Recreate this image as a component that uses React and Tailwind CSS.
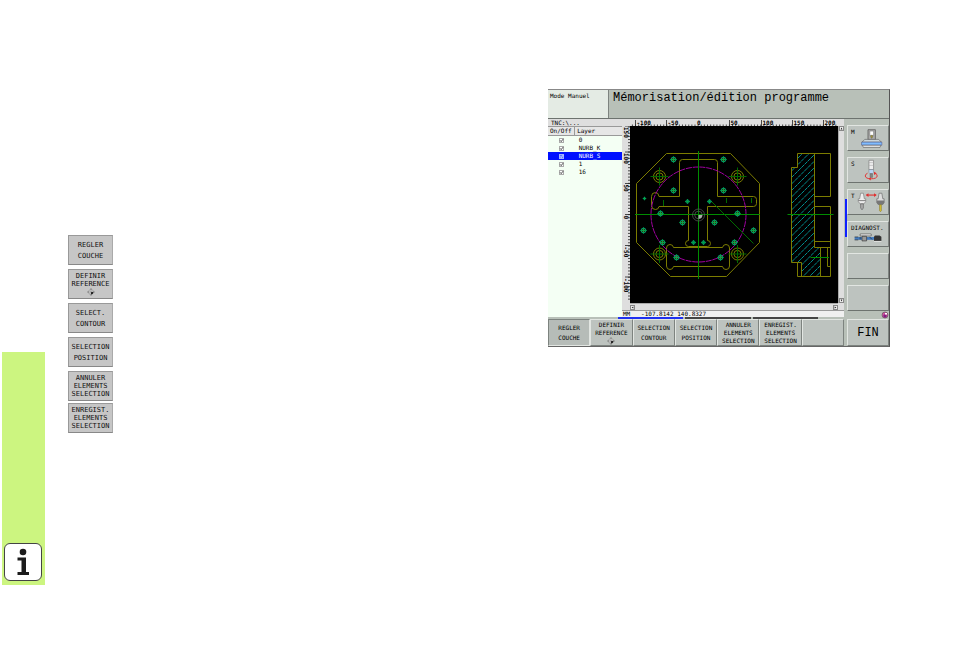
import { useState } from "react";

const layerNames = ["0", "NURB_K", "NURB_S", "1", "16"];

const sideKeys = [
	["REGLER", "COUCHE"],
	["DEFINIR", "REFERENCE", "*"],
	["SELECT.", "CONTOUR"],
	["SELECTION", "POSITION"]
];

const sideKeysTight = [
	["ANNULER", "ELEMENTS", "SELECTION"],
	["ENREGIST.", "ELEMENTS", "SELECTION"]
];

const softKeys = [
	["REGLER", "COUCHE"],
	["DEFINIR", "REFERENCE", "*"],
	["SELECTION", "CONTOUR"],
	["SELECTION", "POSITION"],
	["ANNULER", "ELEMENTS", "SELECTION"],
	["ENREGIST.", "ELEMENTS", "SELECTION"],
	[]
];

// [x, y, radius]
const holes = [
	[43, 33, 2.4],
	[93, 33, 2.4],
	[43, 64, 2.4],
	[93, 64, 2.4],
	[14, 72, 1],
	[57, 75, 1.6],
	[79, 75, 1.6],
	[30, 87, 2.4],
	[107, 87, 2.4],
	[52, 96, 2.4],
	[84, 96, 2.4],
	[13, 104, 2.4],
	[123, 104, 2.4],
	[32, 116, 2.4],
	[104, 116, 2.4],
	[46, 131, 2.4],
	[90, 131, 2.4],
	[63, 116, 1.6],
	[73, 116, 1.6]
];

const bores = [
	[29.5, 50.5],
	[107.5, 50.5],
	[29.5, 128],
	[107.5, 128]
];

function DatumIcon() {
	return (
		<svg viewBox="0 0 8 8" className="block h-2 w-2" aria-hidden="true">
			<circle cx="4" cy="4" r="2.4" fill="#eee" stroke="#777" strokeWidth=".6" />
			<path d="M4 4h2.4A2.4 2.4 0 0 1 4 6.400z" fill="#111" />
			<path d="M4 0v8M0 4h8" stroke="#555" strokeWidth=".5" />
		</svg>
	);
}

function KeyLines({ lines }) {
	return lines.map((line, index) => (line === "*" ? <DatumIcon key={index} /> : <span key={index}>{line}</span>));
}

function SideKey({ lines }) {
	return (
		<button
			className={
				"flex h-[30px] w-full flex-col items-center justify-center border border-t-[#999] border-l-[#999] border-r-[#aaa] border-b-[#888] bg-[#c6c6c6] text-[7px] leading-2 text-[#111] " +
				(lines.length === 2 ? "gap-[3px]" : "")
			}
		>
			<KeyLines lines={lines} />
		</button>
	);
}

function SoftKey({ lines, pressed }) {
	return (
		<button
			className={
				"flex h-[27px] min-w-0 flex-col items-center justify-center border text-[6px] leading-2 " +
				(pressed
					? "border-t-[#7d837f] border-l-[#7d837f] border-r-[#e2e6e2] border-b-[#e2e6e2] bg-[#b6bcb8] "
					: "border-t-[#e2e6e2] border-l-[#e2e6e2] border-r-[#7d837f] border-b-[#7d837f] bg-[#bdc3bf] ") +
				(lines.length === 2 ? "gap-0.5" : "")
			}
			aria-label={lines.length ? undefined : "-"}
		>
			<KeyLines lines={lines} />
		</button>
	);
}

function MachineKey({ label, children }) {
	return (
		<button
			className="relative block h-[26px] w-full border border-t-[#e2e6e2] border-l-[#e2e6e2] border-r-[#7d837f] border-b-[#6d736f] bg-[#bdc3bf] text-left text-[6px] leading-2"
			aria-label={label || "-"}
		>
			<svg viewBox="0 0 41 26" className="absolute inset-0 h-full w-full" aria-hidden="true">
				{children}
			</svg>
			<span className="absolute top-0.5 left-[3px]">{label}</span>
		</button>
	);
}

function Hole({ x, y, r }) {
	return (
		<g fill="none">
			<circle cx={x} cy={y} r={r} stroke="#00a070" strokeWidth="1" />
			{r > 2 && <circle cx={x} cy={y} r="1.1" stroke="#8a9a20" strokeWidth=".8" />}
			<path d={`M${x - r - 0.8} ${y}h${2 * r + 1.6}M${x} ${y - r - 0.8}v${2 * r + 1.6}`} stroke="#00b050" strokeWidth=".8" />
		</g>
	);
}

function Drawing() {
	return (
		<svg viewBox="0 0 208 177" className="block w-full bg-black" role="img" aria-label="Contour">
			<defs>
				<clipPath id="section">
					<path d="M167.5 27.5H184.5V121.5H190.5V150.5H171.5V136.5H161.5V41.5H167.5z" />
				</clipPath>
			</defs>

			{/* hatched section */}
			<g clipPath="url(#section)" stroke="#00a0a0" strokeWidth=".9" strokeDasharray="4 .6">
				{Array.from({ length: 28 }, (_, i) => (
					<path key={i} d={`M155 ${32 + i * 6.5}l45 -45`} />
				))}
			</g>

			<g fill="none" stroke="#7c7c00" strokeWidth="1">
				<path d="M36.5 27.5H100.5L129.5 57.5V116.5L96.5 150.5H40.5L6.5 116.5V57.5z" />
				<path d="M52.5 33.5H84.5Q87.5 33.5 87.5 36.5V70.5H123.5Q126.5 70.5 126.5 73.5V77.5Q126.5 80.5 123.5 80.5H77.5V114.5Q80.5 114.5 80.5 117.5T77.5 120.5H58.5Q55.5 120.5 55.5 117.5T58.5 114.5V80.5H29Q28.5 83.5 25.5 83.5Q21.5 83.5 21.5 79.5V70.5Q21.5 66.5 25.5 66.5Q28.5 66.5 29 70.5H49.5V36.5Q49.5 33.5 52.5 33.5z" />
				<path d="M43.5 121.5H92.5Q93 118.5 96 118.5Q99.5 118.5 99.5 122V140Q99.5 143.5 96 143.5Q93 143.5 92.5 140.5H43.5Q43 143.5 40 143.5Q36.5 143.5 36.5 140V122Q36.5 118.5 40 118.5Q43 118.5 43.5 121.5z" />
				<path d="M167.5 27.5H200.5V70.5H184.5M167.5 27.5V41.5H161.5V136.5H171.5V150.5M184.5 27.5V121.5H200.5M184.5 80.5H200.5V150.5H167.5V136.5M184.5 115.5H200.5M190.5 121.5V150.5M197.5 121.5V140.5H200.5" />
				{bores.map(([x, y]) => (
					<g key={x + "-" + y}>
						<circle cx={x} cy={y} r="6" />
						<circle cx={x} cy={y} r="3.6" />
					</g>
				))}
			</g>

			<circle cx="68.5" cy="88.5" r="47.5" fill="none" stroke="#a000a0" strokeWidth="1" strokeDasharray="6 .8" />

			<g fill="none" stroke="#006c00" strokeWidth="1">
				<path d="M68.5 25V153M5 88.5H130M157.5 88.5H203.5M180.5 131.5H199" stroke="#008c00" />
				<path d="M82 76L123.5 117.5M33.5 74V80M96.5 72V77M121.5 72V77" />
				{bores.map(([x, y]) => (
					<path key={x + "-" + y} d={`M${x - 9} ${y}h18M${x} ${y - 9}v18`} />
				))}
			</g>

			{holes.map(([x, y, r]) => (
				<Hole key={x + "-" + y} x={x + 0.5} y={y + 0.5} r={r} />
			))}

			<g fill="none" stroke="#555" strokeWidth=".8">
				<circle cx="68.5" cy="89" r="6" />
				<circle cx="68.5" cy="89" r="3.8" />
			</g>
			<path d="M68.5 89h3.8a3.8 3.8 0 0 1-3.8 3.8z" fill="#aaa" />
		</svg>
	);
}

function TopRuler() {
	const labels = [
		[5.5, "-100"],
		[36.5, "-50"],
		[68.5, "0"],
		[99.5, "50"],
		[131.5, "100"],
		[162.5, "150"],
		[193.5, "200"]
	];
	return (
		<svg viewBox="0 0 208 7" className="block w-full bg-[#dedede]" aria-hidden="true">
			{Array.from({ length: 66 }, (_, i) => (
				<path key={i} d={`M${2.4 + i * 3.13} 5.5V7`} stroke="#222" strokeWidth=".8" />
			))}
			{labels.map(([x, text]) => (
				<g key={text}>
					{text !== "0" && <path d={`M${x} 1V7`} stroke="#222" strokeWidth=".8" />}
					<text x={text === "0" ? x - 1.5 : x + 1} y="5.5" fontSize="6" fontWeight="bold">
						{text}
					</text>
				</g>
			))}
		</svg>
	);
}

function SideRuler() {
	const labels = [
		[0, "150"],
		[26, "100"],
		[57.5, "50"],
		[88.5, "0"],
		[119.5, "-50"],
		[151, "-100"]
	];
	return (
		<svg viewBox="0 0 8 177" preserveAspectRatio="none" className="block h-full w-full bg-[#dedede]" aria-hidden="true">
			{Array.from({ length: 56 }, (_, i) => (
				<path key={i} d={`M6 ${1 + i * 3.13}H8`} stroke="#222" strokeWidth=".8" />
			))}
			{labels.map(([y, text]) => (
				<g key={text}>
					<path d={`M3 ${y}H8`} stroke="#222" strokeWidth=".8" />
					<text transform={`translate(2 ${y + 1}) rotate(90)`} fontSize="6" fontWeight="bold">
						{text}
					</text>
				</g>
			))}
		</svg>
	);
}

function ScrollButton({ label, path }) {
	return (
		<button aria-label={label} className="block h-[5px] w-[5px] border border-[#888] bg-[#eee]">
			<svg viewBox="0 0 5 5" className="block h-full w-full">
				<path d={path} fill="#222" />
			</svg>
		</button>
	);
}

function LayerList({ selected, onSelect }) {
	const [visible, setVisible] = useState(layerNames);

	const toggle = (name) => {
		setVisible(visible.includes(name) ? visible.filter((item) => item !== name) : [...visible, name]);
	};

	return (
		<div className="bg-[#f4fff4] text-[6px] leading-2">
			<p className="h-2 border-b border-[#999] bg-[#dedede] pl-[3px] leading-[7px]">TNC:\...</p>
			<table className="w-full table-fixed border-collapse">
				<thead>
					<tr className="h-2 bg-[#e6e6e6] text-left">
						<th className="w-[36%] border-r border-b border-[#999] p-0 pl-0.5 font-normal">On/Off</th>
						<th className="border-b border-[#999] p-0 pl-0.5 font-normal">Layer</th>
					</tr>
				</thead>
				<tbody>
					{layerNames.map((name) => (
						<tr
							key={name}
							onClick={() => onSelect(name)}
							className={name === selected ? "h-2 bg-[#0010ff] text-white" : "h-2"}
						>
							<td className="p-0">
								<label className="relative mx-auto block h-[5px] w-[5px]">
									<input
										type="checkbox"
										aria-label={name}
										checked={visible.includes(name)}
										onChange={() => toggle(name)}
										className={
											"peer absolute inset-0 block h-[5px] w-[5px] appearance-none border " +
											(name === selected ? "border-[#a0b0ff] bg-[#5c78ff]" : "border-[#aaa] bg-white")
										}
									/>
									<svg viewBox="0 0 5 5" className="pointer-events-none absolute inset-0 hidden peer-checked:block">
										<path d="M1.2 2.4L2.2 3.6L4 1.2" fill="none" stroke="currentColor" strokeWidth=".7" />
									</svg>
								</label>
							</td>
							<td className="p-0 pl-1">{name}</td>
						</tr>
					))}
				</tbody>
			</table>
		</div>
	);
}

function ControlScreen() {
	const [selected, setSelected] = useState("NURB_S");

	return (
		<section className="border-t border-r border-b border-t-[#888] border-r-[#555] border-b-[#666] bg-[#b8c0b8] text-black">
			{/* HEADER */}
			<header className="grid grid-cols-[60fr_281fr] border-b border-[#6d736f]">
				<p className="h-7 bg-[#e4ebe4] pt-0.5 pl-0.5 text-[6px] leading-2">Mode Manuel</p>
				<h1 className="border-l border-[#7d837f] pl-1 font-['Liberation_Mono','DejaVu_Sans_Mono',monospace] text-[12px] leading-4">
					Mémorisation/édition programme
				</h1>
			</header>

			<div className="grid grid-cols-[296fr_45fr]">
				<div className="flex flex-col">
					<div className="grid grow grid-cols-[74fr_222fr]">
						<LayerList selected={selected} onSelect={setSelected} />

						{/* VIEWER */}
						<div className="grid grid-cols-[8px_1fr_6px] bg-[#dedede]">
							<div />
							<TopRuler />
							<div />
							<SideRuler />
							<Drawing />
							<div className="flex flex-col items-center justify-between border-l border-[#aaa]">
								<ScrollButton label="Up" path="M2.5 1L4 4H1z" />
								<ScrollButton label="Down" path="M2.5 4L4 1H1z" />
							</div>
							<div />
							<div className="flex h-[7px] items-center justify-between border-t border-[#aaa]">
								<ScrollButton label="Left" path="M1 2.5L4 1V4z" />
								<ScrollButton label="Right" path="M4 2.5L1 1V4z" />
							</div>
							<div />
							<p className="col-span-3 h-[7px] border-t border-[#999] bg-[#f0f0f0] pl-px text-[6px] leading-[6px] whitespace-pre">
								{"MM   -107.8142 140.8327"}
							</p>
						</div>
					</div>
					<div className="flex h-0.5 gap-0.5">
						<div className="flex-[68]" />
						<div className="flex-[66] bg-[#2030f0]" />
						<div className="flex-[66] bg-[#444]" />
						<div className="flex-[66] bg-[#444]" />
						<div className="flex-[24]" />
					</div>
				</div>

				{/* MACHINE KEYS */}
				<div className="relative flex flex-col gap-1.5 pt-1.5 pl-[3px]">
					<div className="absolute top-[40%] left-px h-[19%] w-0.5 bg-[#1020ff]" />
					<MachineKey label="M">
						<path d="M20.5 4h8v11h-8z" fill="#aaa" stroke="#555" strokeWidth=".8" />
						<path d="M22.5 5.5h4v5h-4z" fill="#fff" stroke="#666" strokeWidth=".5" />
						<path d="M23.5 10h2v2l-1 1.5l-1-1.5z" fill="#a89830" stroke="#555" strokeWidth=".4" />
						<path d="M17 14.5h15l3 3H14z" fill="#ccd6dc" stroke="#555" strokeWidth=".6" />
						<path d="M13.500 17.5h22v3.300h-22z" fill="#7fbcff" stroke="#447" strokeWidth=".5" />
						<path d="M14.500 20.800h20l-1 2.500H15.500z" fill="#ddd" stroke="#555" strokeWidth=".6" />
					</MachineKey>
					<MachineKey label="S">
						<path d="M21.5 2.5h5v10h-5z" fill="#eee" stroke="#777" strokeWidth=".7" />
						<path d="M21.5 5h5M21.5 8h5" stroke="#aaa" strokeWidth=".6" />
						<path d="M21.5 12.5h5v3l-1 1.5h-3l-1-1.5z" fill="#b8d4f4" stroke="#777" strokeWidth=".5" />
						<path d="M22.8 17h2.5v4h-2.5z" fill="#888" stroke="#444" strokeWidth=".4" />
						<path d="M20 16.5Q17.500 17.5 17.5 19.5Q18 22.500 24 22.5T30.5 19.5Q30.5 17.5 28 16.5" fill="none" stroke="#e03030" strokeWidth="1" />
						<path d="M27 15l3 1.5l-3 1.8zM21 22.5l2.5-1.8v3.600z" fill="#e03030" />
					</MachineKey>
					<MachineKey label="T">
						<path d="M12.5 3.5h3l1 6H18v3l-2 2.5h-4l-2-2.5v-3h1.5z" fill="#eee" stroke="#777" strokeWidth=".7" />
						<path d="M10 11.5h8" stroke="#777" strokeWidth="1" />
						<path d="M12.5 15h3v4.5l-1.5 2l-1.500-2z" fill="#aaa" stroke="#555" strokeWidth=".6" />
						<path d="M32.5 3.5h3l1 6H38v4l-1.5 2h-5l-1.5-2v-4h1.5z" fill="#ddd" stroke="#666" strokeWidth=".7" />
						<path d="M30 11.5h8v2.5l-1.5 2h-5l-1.5-2z" fill="#777" />
						<path d="M33 16h2v6.5l-1 1l-1-1z" fill="#d8c030" stroke="#776a20" strokeWidth=".5" />
						<path d="M19 5.5h10" stroke="#e03030" strokeWidth="1.2" />
						<path d="M18 5.5l3-2v4zM30 5.5l-3-2v4z" fill="#e03030" />
					</MachineKey>
					<MachineKey label="DIAGNOST.">
						<path d="M12 13h12v2H12z" fill="#fff" stroke="#444" strokeWidth=".7" />
						<path d="M6 17.8h21" stroke="#447cc0" strokeWidth="3" />
						<path d="M6 16.2h4M6 19.4h4M12 16v3M22 16l3 3" stroke="#222" strokeWidth=".7" />
						<path d="M14 15.5h5v5h-5z" fill="#999" stroke="#333" strokeWidth=".7" />
						<path d="M28 14.5h5l2 1.5v4.5h-8V16z" fill="#333" />
						<path d="M27 21h8" stroke="#eee" strokeWidth=".8" />
					</MachineKey>
					<MachineKey />
					<MachineKey />
					<svg viewBox="0 0 8 8" className="absolute right-0 bottom-0 h-2 w-2" aria-hidden="true">
						<circle cx="4" cy="4" r="3" fill="#d050a0" stroke="#555" strokeWidth=".6" />
						<path d="M2 5L4 3l2 2L4 7z" fill="#802080" />
						<path d="M4 2h2v1.500H4z" fill="#fff" />
					</svg>
				</div>
			</div>

			{/* SOFT KEYS */}
			<div className="grid grid-cols-[296fr_45fr]">
				<div className="grid grid-cols-7">
					{softKeys.map((lines, index) => (
						<SoftKey key={index} lines={lines} pressed={index === 0} />
					))}
				</div>
				<button className="ml-[3px] border border-t-[#e2e6e2] border-l-[#e2e6e2] border-r-[#7d837f] border-b-[#7d837f] bg-[#bdc3bf] font-['Liberation_Mono','DejaVu_Sans_Mono',monospace] text-[12px] leading-4">
					FIN
				</button>
			</div>
		</section>
	);
}

export default function App() {
	return (
		<main className="flex min-h-screen bg-white pr-16 pl-0.5 font-['DejaVu_Sans_Mono','Liberation_Mono',monospace]">
			{/* MARGIN STRIP */}
			<aside className="w-[43px] shrink-0 pt-88">
				<div className="flex h-[233px] flex-col items-start justify-end bg-[#ccf580] pb-1 pl-0.5">
					<button aria-label="Info" className="h-[38px] w-[38px] rounded-md border border-[#444] bg-white">
						<svg viewBox="0 0 36 36" className="block h-full w-full">
							<circle cx="18" cy="8" r="3.3" fill="#1c1c1c" />
							<path d="M12.500 13.5H21V28h3v3H12.500v-3h4V16.5h-4z" fill="#1c1c1c" />
						</svg>
					</button>
				</div>
			</aside>

			<div className="grid grow grid-cols-[503fr_342fr]">
				<div className="flex w-[68px] flex-col gap-1 pt-[235px] pl-[23px]">
					{sideKeys.map((lines) => (
						<SideKey key={lines.join()} lines={lines} />
					))}
					<div className="flex flex-col gap-0.5">
						{sideKeysTight.map((lines) => (
							<SideKey key={lines.join()} lines={lines} />
						))}
					</div>
				</div>
				<div className="pt-[89px]">
					<ControlScreen />
				</div>
			</div>
		</main>
	);
}
